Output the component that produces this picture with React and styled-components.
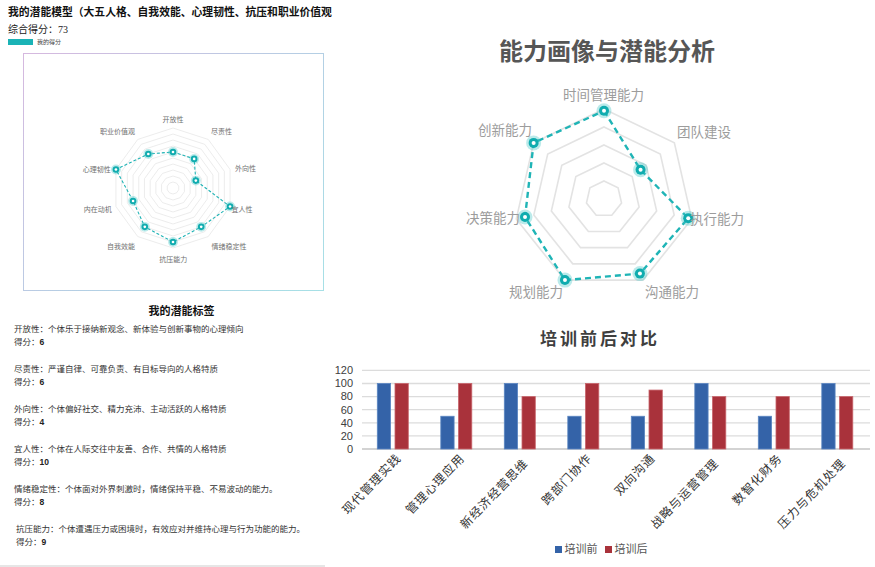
import React from 'react';
import styled, { createGlobalStyle } from 'styled-components';

const GlobalStyle = createGlobalStyle`
  html, body {
    margin: 0;
    padding: 0;
    background: #fff;
  }
  body {
    font-family: "Noto Sans CJK SC", sans-serif;
  }
`;

const TEAL = '#10acaf';
const SERIF = '"Liberation Serif", "Noto Sans CJK SC", serif';
const SANS = '"Noto Sans CJK SC", "Noto Sans", sans-serif';

const Page = styled.div`
  display: flex;
  width: 875px;
  height: 567px;
  overflow: hidden;
`;

const LeftPane = styled.section`
  box-sizing: border-box;
  flex-shrink: 0;
  width: 325px;
  height: 567px;
  padding-left: 8px;
  border-bottom: 2px solid #e6e6e6;
`;

const ModelTitle = styled.h1`
  margin: 4px 0 0;
  font: bold 10.8px/14px ${SANS};
  color: #111;
  white-space: nowrap;
`;

const TotalScore = styled.div`
  margin-top: 5px;
  font: 10px/14px ${SERIF};
  color: #222;
`;

const LegendRow = styled.div`
  display: flex;
  align-items: center;
  gap: 4px;
  margin-top: 2px;
  height: 6px;
`;

const Swatch = styled.span`
  display: inline-block;
  width: ${p => p.$w}px;
  height: ${p => p.$h}px;
  background: ${p => p.$color};
`;

const TinyLabel = styled.span`
  font: 6px/6px ${SANS};
  color: #444;
`;

const ChartBox = styled.div`
  box-sizing: border-box;
  width: 301px;
  height: 238px;
  margin: 8px 0 0 15px;
  border: 1px solid;
  border-image: linear-gradient(135deg, #d6b8df, #b4cfe4 55%, #a6e0e6) 1;
`;

const ChartSvg = styled.svg`
  display: block;
`;

const SectionHeading = styled.h2`
  margin: 11px 0 0;
  padding-left: 30px;
  text-align: center;
  font: bold 11px/16px ${SANS};
  color: #111;
`;

const TraitList = styled.div`
  margin-top: 5px;
`;

const Trait = styled.div`
  padding-left: ${p => (p.$indent ? 8 : 6)}px;
  margin-bottom: 14px;
  font: 8.5px/13px ${SERIF};
  color: #333;
`;

const Num = styled.b`
  font-family: "Liberation Sans", sans-serif;
  color: #222;
`;

const RightPane = styled.section`
  width: 550px;
  display: flex;
  flex-direction: column;
`;

const AnalysisTitle = styled.h1`
  margin: 35px 0 0;
  padding-left: 14px;
  text-align: center;
  font: bold 24px/30px ${SANS};
  color: #565656;
`;

const BarTitle = styled.h2`
  margin: 0;
  text-align: center;
  font: bold 17px/24px ${SERIF};
  letter-spacing: 3px;
  color: #3f3f3f;
`;

const BarLegend = styled.div`
  display: flex;
  justify-content: center;
  align-items: center;
  gap: 3px;
  padding-left: 2px;
  font: 11px/16px ${SERIF};
  color: #555;
`;

const LegendText = styled.span`
  margin-right: ${p => p.$gap || 0}px;
`;

const traits = [
  ['开放性：个体乐于接纳新观念、新体验与创新事物的心理倾向', 6],
  ['尽责性：严谨自律、可靠负责、有目标导向的人格特质', 6],
  ['外向性：个体偏好社交、精力充沛、主动活跃的人格特质', 4],
  ['宜人性：个体在人际交往中友善、合作、共情的人格特质', 10],
  ['情绪稳定性：个体面对外界刺激时，情绪保持平稳、不易波动的能力。', 8],
  ['抗压能力：个体遭遇压力或困境时，有效应对并维持心理与行为功能的能力。', 9],
];

const polar = (cx, cy, r, deg) => {
  const a = (deg * Math.PI) / 180;
  return [cx + r * Math.cos(a), cy + r * Math.sin(a)];
};

const ring = (cx, cy, r, n) =>
  Array.from({ length: n }, (_, i) => polar(cx, cy, r, -90 + (360 / n) * i).join(',')).join(' ');

const Marker = ({ x, y, size }) => (
  <g>
    <circle cx={x} cy={y} r={size * 1.5} fill="#3cc2c3" opacity="0.35" />
    <circle cx={x} cy={y} r={size} fill={TEAL} />
    <circle cx={x} cy={y} r={size * 0.4} fill="#fff" />
  </g>
);

// small ten-axis radar, coordinates inside the bordered box
const smallValues = [6, 6, 4, 10, 8, 9, 8, 7, 10, 7];
const smallLabels = [
  ['开放性', 149, 65.5, 'middle'],
  ['尽责性', 187, 77.7, 'start'],
  ['外向性', 211, 115, 'start'],
  ['宜人性', 207.5, 155.3, 'start'],
  ['情绪稳定性', 187.5, 192.7, 'start'],
  ['抗压能力', 149.3, 205.3, 'middle'],
  ['自我效能', 111, 192.7, 'end'],
  ['内在动机', 87.7, 155.3, 'end'],
  ['心理韧性', 86.7, 115.3, 'end'],
  ['职业价值观', 111, 77.7, 'end'],
];

const SmallRadar = () => {
  const cx = 149;
  const cy = 134;
  const R = 60;
  const pts = smallValues.map((v, i) => polar(cx, cy, (v / 10) * R, -90 + 36 * i));
  return (
    <ChartSvg width="299" height="236">
      {Array.from({ length: 10 }, (_, k) => (
        <polygon key={k} points={ring(cx, cy, 6 * (k + 1), 10)} fill="none" stroke="#e4e4e4" strokeWidth="0.7" />
      ))}
      <polygon points={pts.map(p => p.join(',')).join(' ')} fill="none" stroke="#1fb3b5" strokeWidth="1.1" strokeDasharray="3 2" />
      {pts.map(([x, y], i) => (
        <Marker key={i} x={x} y={y} size={3.3} />
      ))}
      {smallLabels.map(([t, x, y, a]) => (
        <text key={t} x={x} y={y} dy="0.35em" textAnchor={a} fontSize="7" fill="#707070" fontFamily={SANS}>
          {t}
        </text>
      ))}
    </ChartSvg>
  );
};

// seven-axis ability radar, svg origin at page (325, 65)
const bigValues = [0.98, 0.52, 0.96, 0.92, 1, 0.9, 1];
const bigLabels = [
  ['时间管理能力', 278.5, 30, 'middle'],
  ['团队建设', 352, 67, 'start'],
  ['执行能力', 365, 154, 'start'],
  ['沟通能力', 320, 227, 'start'],
  ['规划能力', 238, 227, 'end'],
  ['决策能力', 195, 153, 'end'],
  ['创新能力', 207, 65, 'end'],
];

const AbilityRadar = () => {
  const cx = 279;
  const cy = 134;
  const R = 90;
  const step = 360 / 7;
  const pts = bigValues.map((v, i) => polar(cx, cy, v * R, -90 + step * i));
  return (
    <ChartSvg width="550" height="263">
      {[1, 2, 3, 4, 5].map(k => (
        <polygon key={k} points={ring(cx, cy, 18 * k, 7)} fill="none" stroke="#e3e3e3" strokeWidth="1.6" />
      ))}
      <polygon points={pts.map(p => p.join(',')).join(' ')} fill="none" stroke="#1fb4b6" strokeWidth="2.4" strokeDasharray="6 4" />
      {pts.map(([x, y], i) => (
        <Marker key={i} x={x} y={y} size={5} />
      ))}
      {bigLabels.map(([t, x, y, a]) => (
        <text key={t} x={x} y={y} dy="0.35em" textAnchor={a} fontSize="13.5" fill="#9c9c9c" fontFamily={SANS}>
          {t}
        </text>
      ))}
    </ChartSvg>
  );
};

// training comparison bars, svg origin at page (325, 352)
const courses = [
  ['现代管理实践', 100, 100],
  ['管理心理应用', 50, 100],
  ['新经济经营思维', 100, 80],
  ['跨部门协作', 50, 100],
  ['双向沟通', 50, 90],
  ['战略与运营管理', 100, 80],
  ['数智化财务', 50, 80],
  ['压力与危机处理', 100, 80],
];

const TrainingBars = () => {
  const left = 37;
  const right = 545;
  const band = (right - left) / courses.length;
  const y = v => 97 - v * 0.655;
  return (
    <ChartSvg width="550" height="189">
      {[0, 20, 40, 60, 80, 100, 120].map(v => (
        <g key={v}>
          <line x1={left} x2={right} y1={y(v)} y2={y(v)} stroke={v === 0 ? '#c4c4c4' : '#dcdcdc'} strokeWidth="1.3" />
          <text x="28" y={y(v)} dy="0.35em" textAnchor="end" fontSize="11" fill="#404040" fontFamily='"Liberation Sans", sans-serif'>
            {v}
          </text>
        </g>
      ))}
      {courses.map(([name, before, after], i) => {
        const x0 = left + i * band;
        const lx = x0 + band / 2 + 5;
        const ly = name.length > 6 ? 109 : 104;
        return (
          <g key={name}>
            <rect x={x0 + 15.3} y={y(before)} width="13.3" height={before * 0.655} fill="#3463a8" stroke="#5b86c2" strokeWidth="0.8" />
            <rect x={x0 + 33} y={y(after)} width="13.3" height={after * 0.655} fill="#a9323b" stroke="#c8646b" strokeWidth="0.8" />
            <text x={lx} y={ly} dy="0.35em" textAnchor="end" fontSize="12" letterSpacing="1" fill="#333" fontFamily={SERIF} transform={`rotate(-46 ${lx} ${ly})`}>
              {name}
            </text>
          </g>
        );
      })}
    </ChartSvg>
  );
};

const App = () => (
  <>
    <GlobalStyle />
    <Page>
      <LeftPane>
        <ModelTitle>我的潜能模型（大五人格、自我效能、心理韧性、抗压和职业价值观</ModelTitle>
        <TotalScore>综合得分：73</TotalScore>
        <LegendRow>
          <Swatch $w={25} $h={6} $color="#1ab3b6" />
          <TinyLabel>我的得分</TinyLabel>
        </LegendRow>
        <ChartBox>
          <SmallRadar />
        </ChartBox>
        <SectionHeading>我的潜能标签</SectionHeading>
        <TraitList>
          {traits.map(([text, score], i) => (
            <Trait key={text} $indent={i === traits.length - 1}>
              <div>{text}</div>
              <div>
                得分：<Num>{score}</Num>
              </div>
            </Trait>
          ))}
        </TraitList>
      </LeftPane>
      <RightPane>
        <AnalysisTitle>能力画像与潜能分析</AnalysisTitle>
        <AbilityRadar />
        <BarTitle>培训前后对比</BarTitle>
        <TrainingBars />
        <BarLegend>
          <Swatch $w={7} $h={7} $color="#3463a8" />
          <LegendText $gap={4}>培训前</LegendText>
          <Swatch $w={7} $h={7} $color="#a9323b" />
          <LegendText>培训后</LegendText>
        </BarLegend>
      </RightPane>
    </Page>
  </>
);

export default App;
